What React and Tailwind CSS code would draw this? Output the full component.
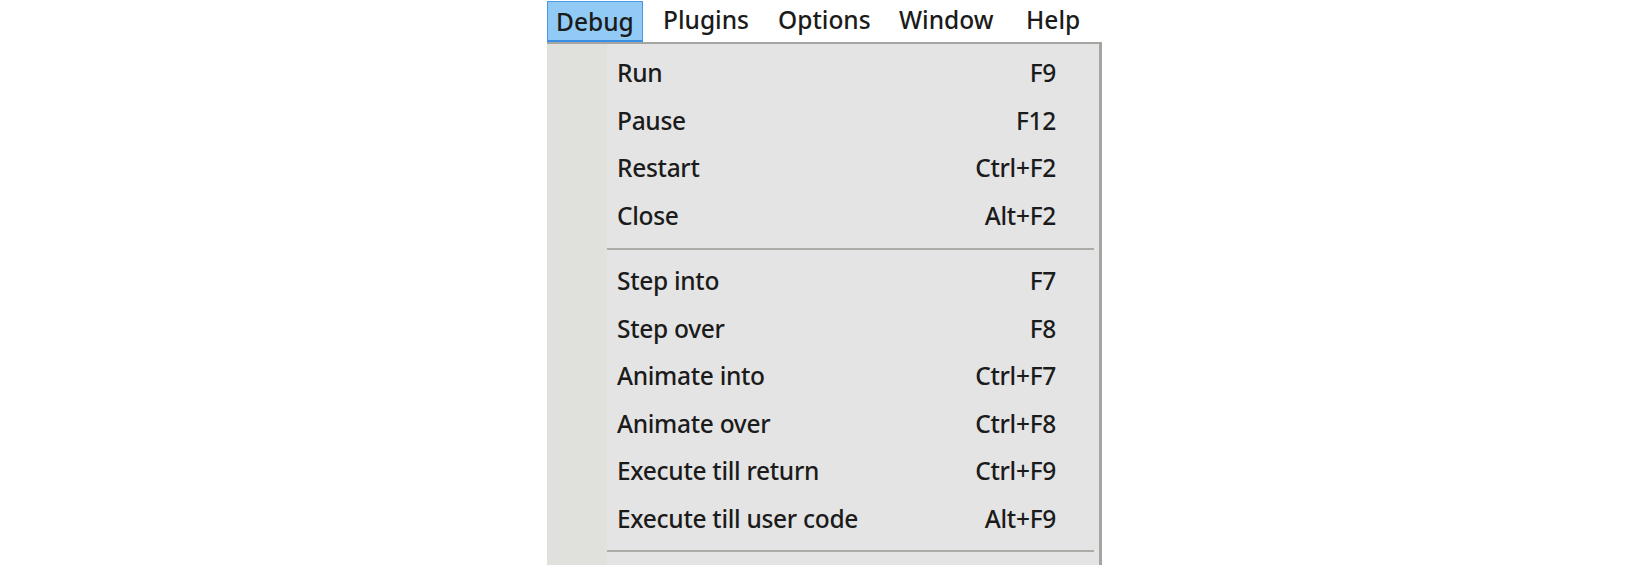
import React from "react";

const group1 = [
  ["Run", "F9"],
  ["Pause", "F12"],
  ["Restart", "Ctrl+F2"],
  ["Close", "Alt+F2"],
];
const group2 = [
  ["Step into", "F7"],
  ["Step over", "F8"],
  ["Animate into", "Ctrl+F7"],
  ["Animate over", "Ctrl+F8"],
  ["Execute till return", "Ctrl+F9"],
  ["Execute till user code", "Alt+F9"],
];

function Row({ label, shortcut }) {
  return (
    <div className="flex h-[47.5px] items-center justify-between pl-[10px] pr-[43px] leading-[47.5px] tracking-[-0.3px]">
      <span>{label}</span>
      <span>{shortcut}</span>
    </div>
  );
}

function Separator({ top }) {
  return (
    <div className={top}>
      <div className="mr-[5px] border-t-2 border-[#ababa8]" />
    </div>
  );
}

export default function App() {
  return (
    <div
      className="h-[565px] w-full overflow-hidden bg-white text-[24.5px] font-medium text-[#1b1b1b]"
      style={{ fontFamily: '"Noto Sans", "Open Sans", sans-serif' }}
    >
      <div className="ml-[547px] w-[555px]">
        <div className="flex h-[42px] items-stretch leading-[40px]">
          <div className="mt-[1px] w-[96px] border border-b-2 border-[#4a98e4] border-b-[#3a8ee6] bg-[#92caf6] pl-[8px]">
            Debug
          </div>
          <div className="flex pl-[20px]">
            <span className="w-[115px]">Plugins</span>
            <span className="w-[121px]">Options</span>
            <span className="w-[127px]">Window</span>
            <span>Help</span>
          </div>
        </div>
        <div className="flex h-[523px] border-r-[3px] border-t-2 border-[#a4a4a0] bg-[#e4e4e4]">
          <div className="w-[60px] bg-[#e0e0dd]" />
          <div className="flex-1 pt-[5px]">
            {group1.map(([l, s]) => (
              <Row key={l} label={l} shortcut={s} />
            ))}
            <Separator top="pt-[9px] pb-[7px]" />
            {group2.map(([l, s]) => (
              <Row key={l} label={l} shortcut={s} />
            ))}
            <Separator top="pt-[8px]" />
          </div>
        </div>
      </div>
    </div>
  );
}
